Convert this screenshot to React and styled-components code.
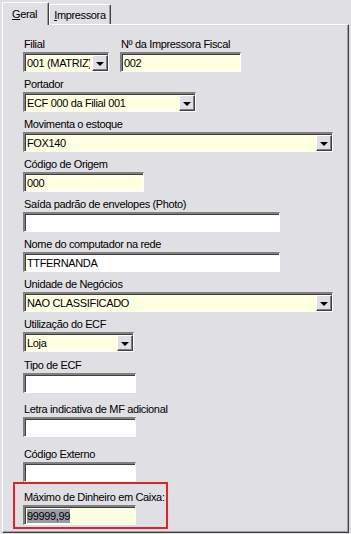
import React from "react";
import styled, { createGlobalStyle } from "styled-components";

const GlobalStyle = createGlobalStyle`
    html, body {
        margin: 0;
        padding: 0;
        background: #e0dfe3;
    }
`;

const Window = styled.div`
    width: 351px;
    height: 534px;
    box-sizing: border-box;
    padding: 2px 2px 1px 2px;
    background: #e0dfe3;
    display: flex;
    flex-direction: column;
    font-family: "Liberation Sans", Arial, sans-serif;
    font-size: 11px;
    letter-spacing: -0.35px;
    color: #000;
    overflow: hidden;
`;

const TabStrip = styled.div`
    display: flex;
    align-items: flex-end;
    height: 22px;
    position: relative;
    z-index: 1;
`;

const Tab = styled.div`
    box-sizing: border-box;
    height: ${(p) => (p.$active ? "23px" : "20px")};
    margin-bottom: ${(p) => (p.$active ? "-1px" : "0")};
    padding: ${(p) => (p.$active ? "4px 11px 0 9px" : "3px 4px 0 4px")};
    background: #e0dfe3;
    border-top: 1px solid #fff;
    border-left: 1px solid #fff;
    border-right: 1px solid #404040;
    box-shadow: inset -1px 0 0 #a0a0a0;
    border-radius: 2px 2px 0 0;
    line-height: 14px;
    white-space: nowrap;

    u {
        text-decoration: underline;
    }
`;

const Panel = styled.div`
    flex: 1;
    box-sizing: border-box;
    border-top: 1px solid #fff;
    border-left: 1px solid #fff;
    border-right: 1px solid #404040;
    border-bottom: 1px solid #404040;
    box-shadow: inset -1px -1px 0 #a0a0a0;
    padding: 12px 0 0 20px;
    display: flex;
    flex-direction: column;
`;

const Row = styled.div`
    display: flex;
    gap: 11px;
`;

const Field = styled.div`
    display: flex;
    flex-direction: column;
    margin-bottom: ${(p) => p.$gap ?? 5}px;
`;

const Label = styled.label`
    display: block;
    height: 15px;
    line-height: 14px;
    padding-left: 1px;
    white-space: nowrap;
`;

const Input = styled.div`
    box-sizing: border-box;
    width: ${(p) => p.$w}px;
    height: 20px;
    background: ${(p) => (p.$white ? "#fff" : "#ffffe1")};
    border-top: 2px solid #808080;
    border-left: 2px solid #808080;
    border-right: 1px solid #fff;
    border-bottom: 1px solid #fff;
    box-shadow: inset 1px 1px 0 #404040;
    padding: 2px 0 0 2px;
    line-height: 14px;
    white-space: nowrap;
    overflow: hidden;
    display: flex;
    align-items: flex-start;
`;

const Value = styled.span`
    flex: 1;
    overflow: hidden;
    white-space: nowrap;
`;

const Selected = styled.span`
    background: #9a9aa8;
    color: #000;
`;

const DropButton = styled.div`
    box-sizing: border-box;
    flex: none;
    width: 16px;
    height: 16px;
    margin: -1px 0 0 2px;
    background: #e0dfe3;
    border-top: 1px solid #fff;
    border-left: 1px solid #fff;
    border-right: 1px solid #404040;
    border-bottom: 1px solid #404040;
    box-shadow: inset -1px -1px 0 #808080;
    display: flex;
    align-items: center;
    justify-content: center;

    &::after {
        content: "";
        width: 0;
        height: 0;
        border-left: 4px solid transparent;
        border-right: 4px solid transparent;
        border-top: 4px solid #000;
        margin: 1px 1px 0 0;
    }
`;

const Highlight = styled.div`
    box-sizing: border-box;
    width: 155px;
    margin: 0 0 0 -10px;
    padding: 6px 0 2px 8px;
    border: 2px solid #d9262c;
`;

const Combo = ({ w, value }) => (
    <Input $w={w}>
        <Value>{value}</Value>
        <DropButton />
    </Input>
);

const App = () => (
    <>
        <GlobalStyle />
        <Window>
            <TabStrip>
                <Tab $active>
                    <u>G</u>eral
                </Tab>
                <Tab>
                    <u>I</u>mpressora
                </Tab>
            </TabStrip>
            <Panel>
                <Row>
                    <Field>
                        <Label>Filial</Label>
                        <Combo w={86} value="001 (MATRIZ)" />
                    </Field>
                    <Field>
                        <Label>Nº da Impressora Fiscal</Label>
                        <Input $w={121}>002</Input>
                    </Field>
                </Row>
                <Field>
                    <Label>Portador</Label>
                    <Combo w={173} value="ECF 000 da Filial 001" />
                </Field>
                <Field>
                    <Label>Movimenta o estoque</Label>
                    <Combo w={310} value="FOX140" />
                </Field>
                <Field>
                    <Label>Código de Origem</Label>
                    <Input $w={121}>000</Input>
                </Field>
                <Field>
                    <Label>Saída padrão de envelopes (Photo)</Label>
                    <Input $w={257} $white />
                </Field>
                <Field>
                    <Label>Nome do computador na rede</Label>
                    <Input $w={257} $white>TTFERNANDA</Input>
                </Field>
                <Field>
                    <Label>Unidade de Negócios</Label>
                    <Combo w={310} value="NAO CLASSIFICADO" />
                </Field>
                <Field $gap={6}>
                    <Label>Utilização do ECF</Label>
                    <Combo w={111} value="Loja" />
                </Field>
                <Field $gap={9}>
                    <Label>Tipo de ECF</Label>
                    <Input $w={113} $white />
                </Field>
                <Field $gap={10}>
                    <Label>Letra indicativa de MF adicional</Label>
                    <Input $w={113} $white />
                </Field>
                <Field $gap={0}>
                    <Label>Código Externo</Label>
                    <Input $w={113} $white />
                </Field>
                <Highlight>
                    <Field $gap={0}>
                        <Label>Máximo de Dinheiro em Caixa:</Label>
                        <Input $w={113}>
                            <Selected>99999,99</Selected>
                        </Input>
                    </Field>
                </Highlight>
            </Panel>
        </Window>
    </>
);

export default App;
